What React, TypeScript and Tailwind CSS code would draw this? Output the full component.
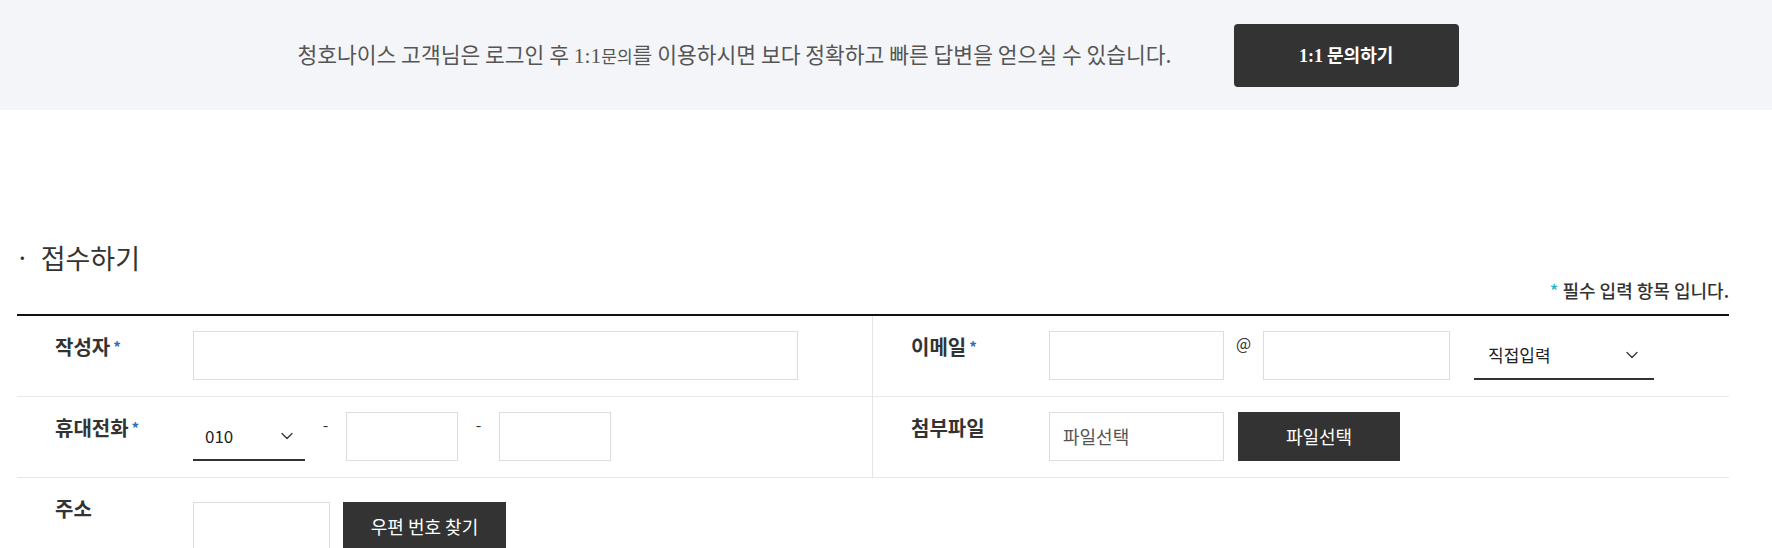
import { ChevronDown } from 'lucide-react'

function Req() {
  return <span className="ml-[3px] text-[15px] align-top text-[#2a6fb8]">*</span>
}

function Label({ children, req }: { children: React.ReactNode; req?: boolean }) {
  return (
    <div className="w-[176px] shrink-0 pl-[38px] pt-[4px] text-[20px] font-bold leading-6 text-[#333]">
      {children}
      {req && <Req />}
    </div>
  )
}

function Box({ className = '', children }: { className?: string; children?: React.ReactNode }) {
  return (
    <div className={`flex h-[49px] items-center border border-[#ddd] bg-white text-[18px] text-[#555] ${className}`}>
      {children}
    </div>
  )
}

function Select({ value, className = '' }: { value: string; className?: string }) {
  return (
    <div className={`flex h-[49px] items-center justify-between border-b-2 border-[#333] text-[17px] text-[#222] ${className}`}>
      <span>{value}</span>
      <ChevronDown size={20} strokeWidth={1.5} className="text-[#333]" />
    </div>
  )
}

export default function App() {
  return (
    <div className="min-h-screen bg-white font-['Noto_Sans_CJK_KR','Noto_Sans',sans-serif] text-[#333]">
      {/* 상단 안내 배너 */}
      <div className="h-[110px] bg-[#f4f5f8]">
        <div className="ml-[22px] flex h-full w-[1712px] items-center justify-center gap-[62px]">
          <p className="text-[21.5px] text-[#555]">
            청호나이스 고객님은 로그인 후{' '}
            <span className="font-['Liberation_Serif',serif]">1:1</span>
            <span className="text-[17px]">문의</span>를 이용하시면 보다 정확하고 빠른 답변을 얻으실 수 있습니다.
          </p>
          <button className="h-[63px] w-[225px] rounded-[4px] bg-[#333] text-[18px] font-bold text-white">
            <span className="font-['Liberation_Serif',serif]">1:1</span> 문의하기
          </button>
        </div>
      </div>

      <div className="ml-[17px] w-[1712px]">
        <h2 className="mt-[128px] flex items-center text-[27px] leading-[39px] text-[#333]">
          <span className="mr-[13px] text-[18px] font-bold">·</span>접수하기
        </h2>
        <p className="mt-[1px] pb-[12px] text-right text-[18px] font-medium leading-6 text-[#333]">
          <span className="mr-[4px] text-[#2bb7c4]">*</span>필수 입력 항목 입니다.
        </p>

        <div className="border-t-2 border-[#111]">
          <div className="grid grid-cols-2 border-b border-[#e8e8e8]">
            <div className="flex items-start border-r border-[#e5e5e5] pt-[15px] pb-[16px]">
              <Label req>작성자</Label>
              <Box className="w-[605px]" />
            </div>
            <div className="flex items-start pt-[15px] pb-[16px]">
              <Label req>이메일</Label>
              <Box className="w-[175px]" />
              <span className="w-[39px] text-center text-[16px] leading-6">@</span>
              <Box className="w-[187px]" />
              <Select value="직접입력" className="ml-[24px] w-[180px] pl-[14px] pr-[12px]" />
            </div>
          </div>

          <div className="grid grid-cols-2 border-b border-[#e8e8e8]">
            <div className="flex items-start border-r border-[#e5e5e5] pt-[15px] pb-[16px]">
              <Label req>휴대전화</Label>
              <Select value="010" className="w-[112px] pl-[12px] pr-[8px]" />
              <span className="w-[41px] text-center text-[16px] leading-6">-</span>
              <Box className="w-[112px]" />
              <span className="w-[41px] text-center text-[16px] leading-6">-</span>
              <Box className="w-[112px]" />
            </div>
            <div className="flex items-start pt-[15px] pb-[16px]">
              <Label>첨부파일</Label>
              <Box className="w-[175px] pl-[13px]">파일선택</Box>
              <button className="ml-[14px] h-[49px] w-[162px] bg-[#333] text-[18px] text-white">파일선택</button>
            </div>
          </div>

          <div className="flex items-start pt-[15px]">
            <Label>주소</Label>
            <div className="mt-[9px] flex gap-[13px]">
              <Box className="w-[137px]" />
              <button className="h-[49px] w-[163px] bg-[#333] text-[18px] text-white">우편 번호 찾기</button>
            </div>
          </div>
        </div>
      </div>
    </div>
  )
}
